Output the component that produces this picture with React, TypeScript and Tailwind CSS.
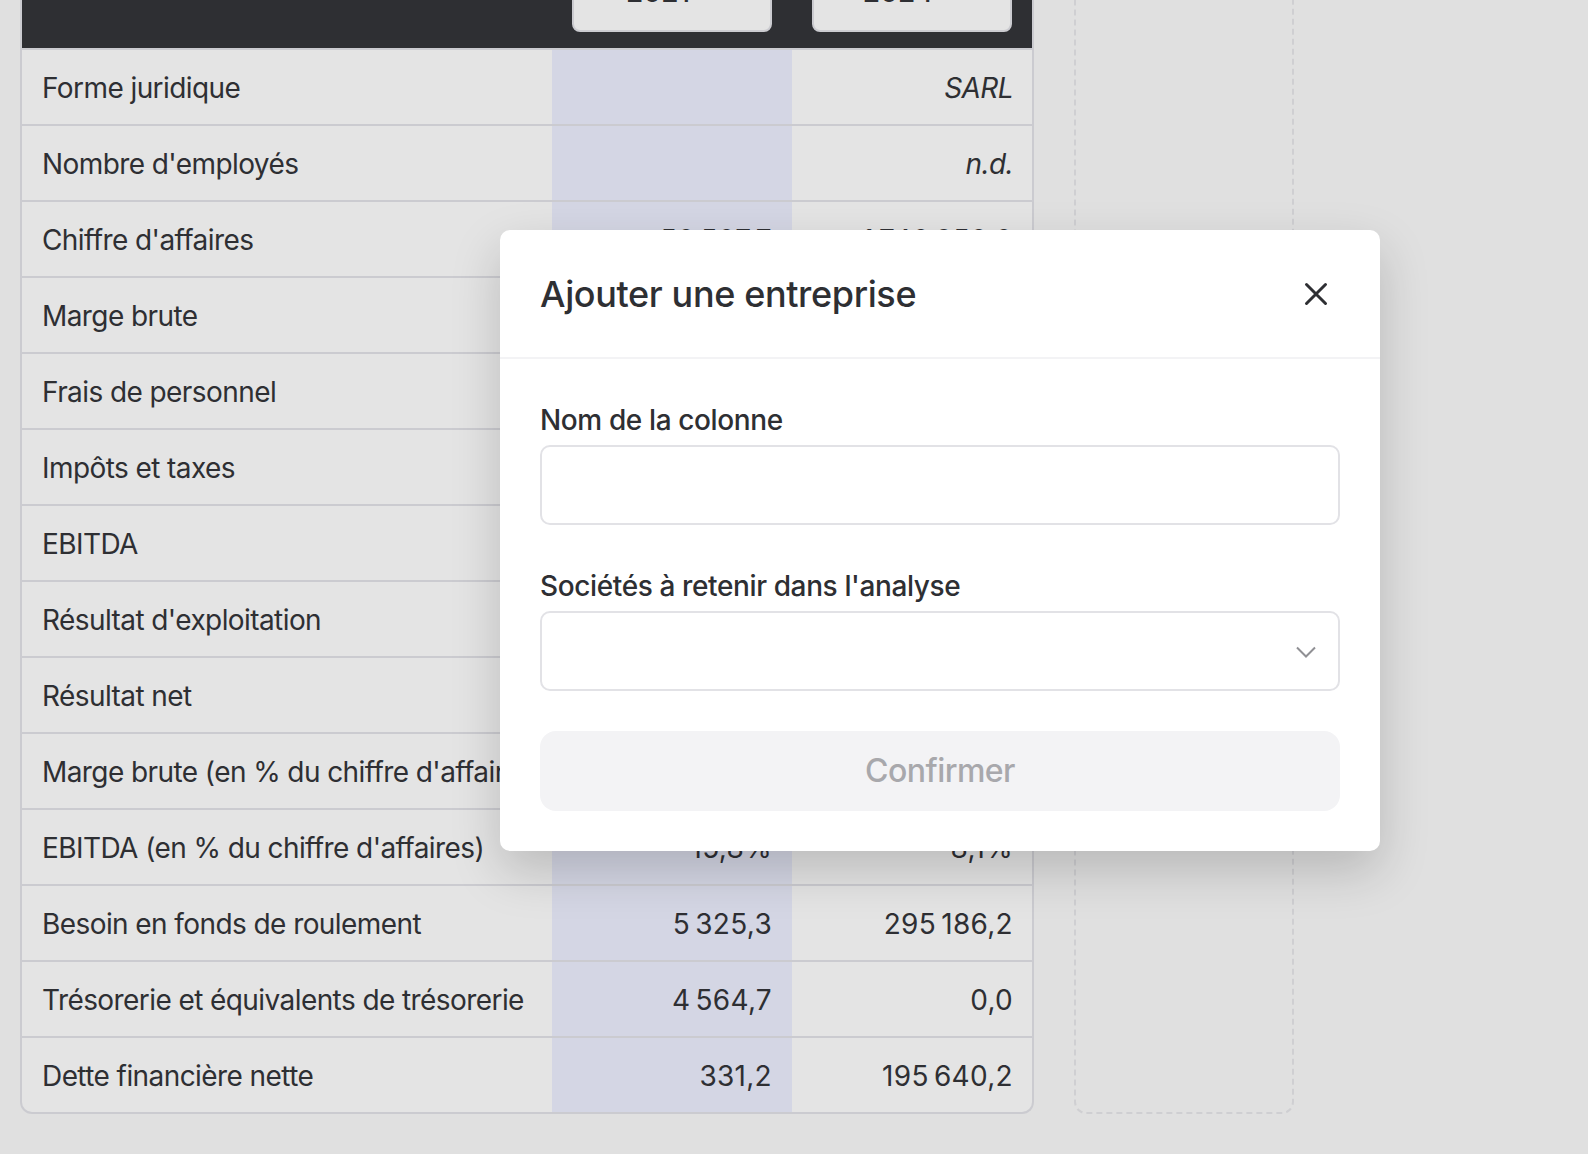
import React from 'react';

type Row = { label: string; a?: string; b?: string; italic?: boolean };

const rows: Row[] = [
  { label: 'Forme juridique', b: 'SARL', italic: true },
  { label: "Nombre d'employés", b: 'n.d.', italic: true },
  { label: "Chiffre d'affaires", a: '50 507,7', b: '1 740 950,0' },
  { label: 'Marge brute' },
  { label: 'Frais de personnel' },
  { label: 'Impôts et taxes' },
  { label: 'EBITDA' },
  { label: "Résultat d'exploitation" },
  { label: 'Résultat net' },
  { label: "Marge brute (en % du chiffre d'affaires)" },
  { label: "EBITDA (en % du chiffre d'affaires)", a: '15,8%', b: '8,1%' },
  { label: 'Besoin en fonds de roulement', a: '5 325,3', b: '295 186,2' },
  { label: 'Trésorerie et équivalents de trésorerie', a: '4 564,7', b: '0,0' },
  { label: 'Dette financière nette', a: '331,2', b: '195 640,2' },
];

function YearButton({ year }: { year: string }) {
  return (
    <div className="flex h-[80px] w-[200px] items-center justify-center rounded-[8px] border-2 border-[#cbcbd0] bg-[#e4e4e4] pr-[28px] text-[28px] font-medium">
      {year}
    </div>
  );
}

export default function App() {
  return (
    <div className="relative h-[1154px] w-[1588px] overflow-hidden bg-[#e0e0e0] font-['Inter',sans-serif] text-[#2e2f33]">
      <div className="flex items-start gap-[40px] pl-[20px]">
        {/* Table */}
        <div className="w-[1014px] overflow-hidden rounded-b-[12px] border-x-2 border-b-2 border-[#cbcbd0] bg-[#e4e4e4]">
          <div className="flex h-[48px] items-end bg-[#2e2f33] pb-[16px]">
            <div className="w-[530px] shrink-0" />
            <div className="flex w-[240px] shrink-0 justify-end pr-[20px]">
              <YearButton year="2021" />
            </div>
            <div className="flex w-[240px] shrink-0 justify-end pr-[20px]">
              <YearButton year="2024" />
            </div>
          </div>
          <div className="border-t-2 border-[#cbcbd0]">
            {rows.map((row, i) => (
              <div
                key={row.label}
                className={i < rows.length - 1 ? 'flex h-[76px] border-b-2 border-[#cbcbd0] text-[28px]' : 'flex h-[74px] text-[28px]'}
              >
                <div className="flex w-[530px] shrink-0 items-center whitespace-nowrap pl-[20px] pt-[1px] tracking-[-0.58px]">
                  {row.label}
                </div>
                <div className="flex w-[240px] shrink-0 items-center justify-end bg-[#d4d6e4] pr-[20px] pt-[1px] tracking-[0.3px] [word-spacing:-3px]">
                  {row.a}
                </div>
                <div
                  className={
                    row.italic
                      ? 'flex flex-1 items-center justify-end pr-[19px] pt-[1px] italic tracking-[-0.6px]'
                      : 'flex flex-1 items-center justify-end pr-[19px] pt-[1px] tracking-[0.3px] [word-spacing:-3px]'
                  }
                >
                  {row.b}
                </div>
              </div>
            ))}
          </div>
        </div>

        {/* Empty column drop zone */}
        <div className="-mt-[20px] h-[1134px] w-[220px] rounded-[12px] border-2 border-dashed border-[#cfcfd2]" />
      </div>

      {/* Modal */}
      <div className="absolute left-[500px] top-[230px] w-[880px] rounded-[10px] bg-white shadow-[0_20px_50px_rgba(0,0,0,0.18)]">
        <div className="flex h-[129px] items-center justify-between border-b-2 border-[#f3f3f5] pl-[40px] pr-[52px]">
          <h2 className="text-[36px] font-medium tracking-[-0.37px]">Ajouter une entreprise</h2>
          <svg width="24" height="24" viewBox="0 0 24 24" fill="none" stroke="#2e2f33" strokeWidth="3" strokeLinecap="round">
            <path d="M2.5 2.5 21.5 21.5M21.5 2.5 2.5 21.5" />
          </svg>
        </div>
        <div className="flex flex-col gap-[40px] p-[40px]">
          <div className="flex flex-col gap-[4px]">
            <label className="text-[28px] font-medium leading-[42px] tracking-[-0.38px]">Nom de la colonne</label>
            <div className="h-[80px] rounded-[10px] border-2 border-[#e2e2e6]" />
          </div>
          <div className="flex flex-col gap-[4px]">
            <label className="text-[28px] font-medium leading-[42px] tracking-[-0.38px]">Sociétés à retenir dans l'analyse</label>
            <div className="flex h-[80px] items-center justify-end rounded-[10px] border-2 border-[#e2e2e6] pr-[22px] pt-[1px]">
              <svg width="20" height="12" viewBox="0 0 20 12" fill="none" stroke="#909094" strokeWidth="2">
                <path d="M1 1.5 10 10.5 19 1.5" />
              </svg>
            </div>
          </div>
          <div className="flex h-[80px] items-center justify-center rounded-[16px] bg-[#f3f3f5] text-[32px] font-medium tracking-[-0.55px] text-[#a8a8ac]">
            Confirmer
          </div>
        </div>
      </div>
    </div>
  );
}
